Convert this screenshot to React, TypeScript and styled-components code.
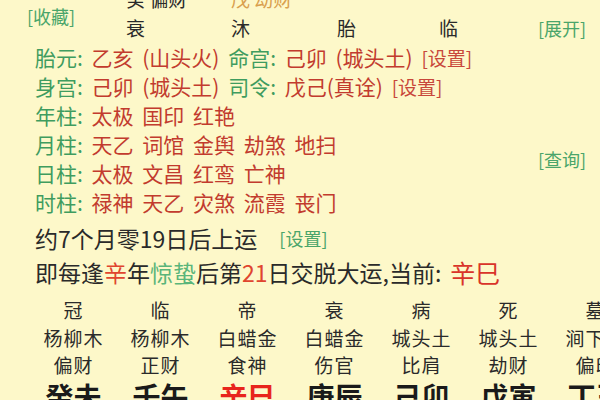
import styled, { createGlobalStyle } from "styled-components"

const Global = createGlobalStyle`
  html, body {
    margin: 0;
    padding: 0;
    background: #fdf8c9;
  }
  body {
    font-family: "Noto Sans CJK SC", "Noto Sans", sans-serif;
    color: #2a2a2a;
  }
`

const Page = styled.div`
  width: 600px;
  height: 400px;
  overflow: hidden;
  background: #fdf8c9;
`

const TopGrid = styled.div`
  margin-top: -16px;
  display: grid;
  grid-template-columns: 126px 105px 106px 102px 99px 1fr;
  grid-auto-rows: 29px;
  font-size: 19px;
  align-items: center;
`

const Cell = styled.span<{ $tone?: "gold" }>`
  color: ${(p) => (p.$tone === "gold" ? "#d9a04e" : "#2a2a2a")};
  white-space: nowrap;
`

const Link = styled.span<{ $red?: boolean; $size?: number }>`
  color: ${(p) => (p.$red ? "#c8473a" : "#4aa56a")};
  font-size: ${(p) => p.$size ?? 18}px;
  white-space: nowrap;
`

const FavCell = styled.div`
  grid-row: 1 / 3;
  padding-left: 27px;
  margin-top: 4px;
`

const Info = styled.div`
  display: grid;
  grid-template-columns: 1fr 62px;
  grid-auto-rows: 29px;
  padding-left: 35px;
  font-size: 21px;
  align-items: center;
`

const Line = styled.div`
  grid-column: 1;
  white-space: nowrap;
  word-spacing: 4px;
`

const Label = styled.span`
  color: #3f9c5f;
`

const Val = styled.span`
  color: #c23b2e;
`

const QueryCell = styled.div`
  grid-column: 2;
  grid-row: 4 / 6;
  align-self: center;
`

const Note = styled.div<{ $h: number }>`
  height: ${(p) => p.$h}px;
  display: flex;
  align-items: center;
  padding-left: 35px;
  font-size: 23px;
  white-space: nowrap;
`

const Hot = styled.span<{ $c: "red" | "green" }>`
  color: ${(p) => (p.$c === "red" ? "#e0452f" : "#5ab57a")};
`

const Big = styled.span`
  color: #d9342a;
  font-size: 25px;
  margin-left: 9px;
`

const Spacer = styled.span`
  display: inline-block;
  width: 22px;
`

const Fortune = styled.div`
  margin-top: 6px;
  display: grid;
  grid-template-columns: repeat(7, 87px);
  grid-template-rows: 30px 26px 28px 36px;
  padding-left: 30px;
  align-items: center;
  justify-items: center;
  font-size: 19px;
  color: #2a2a2a;
`

const Pillar = styled.span<{ $hot?: boolean }>`
  font-size: 28px;
  font-weight: 700;
  color: ${(p) => (p.$hot ? "#e8251c" : "#1a1a1a")};
  white-space: nowrap;
`

const Small = styled.span`
  white-space: nowrap;
  letter-spacing: 1px;
`

const stages = ["冠", "临", "帝", "衰", "病", "死", "墓"]
const nayin = ["杨柳木", "杨柳木", "白蜡金", "白蜡金", "城头土", "城头土", "涧下水"]
const gods = ["偏财", "正财", "食神", "伤官", "比肩", "劫财", "偏印"]
const pillars = ["癸未", "壬午", "辛巳", "庚辰", "己卯", "戊寅", "丁丑"]

const shensha: [string, string][] = [
  ["年柱", "太极 国印 红艳"],
  ["月柱", "天乙 词馆 金舆 劫煞 地扫"],
  ["日柱", "太极 文昌 红鸾 亡神"],
  ["时柱", "禄神 天乙 灾煞 流霞 丧门"],
]

export default function App() {
  return (
    <Page>
      <Global />
      <TopGrid>
        <FavCell>
          <Link>[收藏]</Link>
        </FavCell>
        <Cell>癸 偏财</Cell>
        <Cell $tone="gold">戊 劫财</Cell>
        <Cell />
        <Cell />
        <Cell />
        <Cell>衰</Cell>
        <Cell>沐</Cell>
        <Cell>胎</Cell>
        <Cell>临</Cell>
        <Link>[展开]</Link>
      </TopGrid>

      <Info>
        <Line>
          <Label>胎元:</Label> <Val>乙亥 (山头火)</Val> <Label>命宫:</Label>{" "}
          <Val>己卯 (城头土)</Val> <Link $red $size={19}>[设置]</Link>
        </Line>
        <Line>
          <Label>身宫:</Label> <Val>己卯 (城头土)</Val> <Label>司令:</Label>{" "}
          <Val>戊己(真诠)</Val> <Link $red $size={19}>[设置]</Link>
        </Line>
        {shensha.map(([k, v]) => (
          <Line key={k}>
            <Label>{k}:</Label> <Val>{v}</Val>
          </Line>
        ))}
        <QueryCell>
          <Link>[查询]</Link>
        </QueryCell>
      </Info>

      <Note $h={37} style={{ marginTop: 3 }}>
        约7个月零19日后上运
        <Spacer />
        <Link>[设置]</Link>
      </Note>
      <Note $h={32}>
        即每逢<Hot $c="red">辛</Hot>年<Hot $c="green">惊蛰</Hot>后第
        <Hot $c="red">21</Hot>日交脱大运,当前:<Big>辛巳</Big>
      </Note>

      <Fortune>
        {stages.map((s) => (
          <Small key={"s" + s}>{s}</Small>
        ))}
        {nayin.map((s, i) => (
          <Small key={"n" + i}>{s}</Small>
        ))}
        {gods.map((s) => (
          <Small key={"g" + s}>{s}</Small>
        ))}
        {pillars.map((s) => (
          <Pillar key={s} $hot={s === "辛巳"}>
            {s}
          </Pillar>
        ))}
      </Fortune>
    </Page>
  )
}
